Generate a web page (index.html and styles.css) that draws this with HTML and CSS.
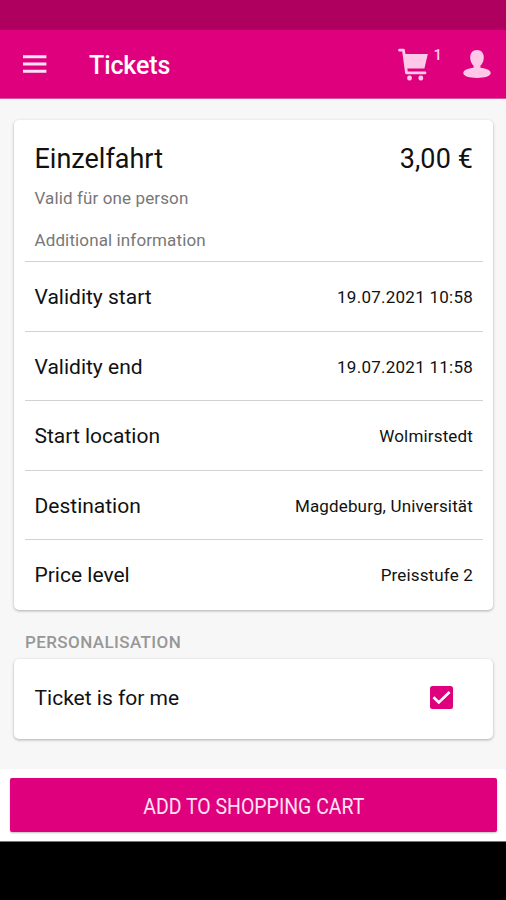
FILE: index.html
```html
<!DOCTYPE html>
<html lang="en">
<head>
<meta charset="utf-8">
<title>Tickets</title>
<link rel="stylesheet" href="styles.css">
</head>
<body>
<div class="status-bar"></div>
<header class="app-bar">
  <svg class="menu-icon" viewBox="0 0 24 18"><path d="M0 1.7h23.4M0 9h23.4M0 16.3h23.4"/></svg>
  <h1 class="app-title">Tickets</h1>
  <svg class="cart-icon" viewBox="0 0 32 33"><path class="cart-basket" d="M6 6h23.800l-3.400 14.500H8.500z"/><path class="cart-frame" d="M1.500 2.200h4l3 22.700h18.500"/><rect x="9.200" y="27.500" width="4.600" height="5" rx="2"/><rect x="20.500" y="27.500" width="4.600" height="5" rx="2"/></svg>
  <span class="cart-count">1</span>
  <svg class="user-icon" viewBox="0 0 28 28"><path d="M14 0c4.400 0 6.800 3.100 6.800 7.500 0 3.600-1.500 6.400-3.400 8.200v2.100c5.800.6 10.300 2.400 10.300 5.200 0 3.200-6.200 4.900-13.700 4.900S.3 26.200.3 23c0-2.800 4.500-4.600 10.300-5.200v-2.100c-1.900-1.800-3.400-4.600-3.400-8.200C7.200 3.100 9.600 0 14 0z"/></svg>
</header>
<main class="content">
  <section class="card">
    <div class="card-head">
      <div class="headline"><h2 class="name">Einzelfahrt</h2><span class="price">3,00 €</span></div>
      <p class="note">Valid für one person</p>
      <p class="note info">Additional information</p>
    </div>
    <dl class="details">
      <div class="row"><dt>Validity start</dt><dd class="date">19.07.2021 10:58</dd></div>
      <div class="row"><dt>Validity end</dt><dd class="date">19.07.2021 11:58</dd></div>
      <div class="row"><dt>Start location</dt><dd>Wolmirstedt</dd></div>
      <div class="row"><dt>Destination</dt><dd>Magdeburg, Universität</dd></div>
      <div class="row"><dt>Price level</dt><dd>Preisstufe 2</dd></div>
    </dl>
  </section>
  <h3 class="section-title">PERSONALISATION</h3>
  <section class="card owner">
    <span class="owner-label">Ticket is for me</span>
    <svg class="checkbox" viewBox="0 0 23 23"><rect width="23" height="23" rx="2.500"/><path d="M3.500 11.300l5.300 5.200L19.600 6"/></svg>
  </section>
</main>
<footer class="actions"><button class="add-button"><span class="add-label">ADD TO SHOPPING CART</span></button></footer>
<div class="nav-bar"></div>
</body>
</html>
```

FILE: styles.css
```css
* { box-sizing: border-box; margin: 0; padding: 0; }
body { width: 506px; height: 900px; overflow: hidden; display: flex; flex-direction: column; background: #f7f7f7; font-family: Roboto, sans-serif; color: #111; }
h1, h2, h3 { font-weight: 400; }
.status-bar { height: 30px; background: #af005f; }
.app-bar { height: 69px; background: #df007d; display: flex; align-items: center; padding: 0 15px 0 23px; border-bottom: 1px solid #d3569e; color: #fff; }
.menu-icon { width: 24px; height: 18px; fill: none; stroke: #ffe2f4; stroke-width: 3; }
.app-title { font-size: 25px; font-weight: 500; line-height: 30px; margin: 4px auto 0 42px; letter-spacing: -.1px; }
.cart-icon { width: 32px; height: 33px; fill: #ffc8e8; margin-right: 3px; }
.cart-frame { fill: none; stroke: #ffc8e8; stroke-width: 2.8; stroke-linejoin: round; stroke-linecap: round; }
.cart-count { font-size: 15px; font-weight: 500; line-height: 16px; color: #ffc8e8; margin: -18px 21px 0 0; }
.user-icon { width: 28px; height: 28px; fill: #ffc8e8; }
.content { height: 670px; padding: 21px 13px 0 14px; }
.card { background: #fff; border-radius: 5px; box-shadow: 0 1px 3px rgba(0,0,0,.3); }
.card-head { height: 141px; padding: 22px 20px 0 20.5px; }
.headline { display: flex; justify-content: space-between; height: 34px; font-size: 27px; line-height: 34px; }
.name { font-size: inherit; }
.price { letter-spacing: .1px; }
.note { font-size: 17px; line-height: 20px; margin-top: 12px; color: #777; letter-spacing: .12px; }
.info { margin-top: 22px; }
.note, .name, .price, .row dt, .row dd, .section-title, .owner-label { white-space: nowrap; }
.details { margin: 0 10px 0 11px; height: 349px; }
.row { height: 69.5px; border-top: 1.5px solid #d2d2d2; padding: 2px 10px 0 9.5px; display: flex; align-items: center; justify-content: space-between; }
.row dt, .owner-label { font-size: 21px; }
.row dd { font-size: 17px; letter-spacing: .16px; }
.row .date { letter-spacing: .25px; }
.section-title { height: 49px; padding: 22px 0 0 11px; font-size: 17px; line-height: 20px; font-weight: 500; letter-spacing: .4px; color: #979797; }
.owner { height: 80px; padding: 0 40px 3px 20.5px; display: flex; align-items: center; justify-content: space-between; }
.checkbox { width: 23px; height: 23px; fill: #df007d; }
.checkbox path { fill: none; stroke: #fff; stroke-width: 2.6; }
.actions { height: 73px; background: #fff; padding: 9px 9px 0 10px; border-bottom: 1px solid #777; }
.add-button { display: block; width: 100%; height: 54px; border: 0; border-radius: 2px; background: #df007d; color: #ffe2f4; font: 400 22.5px/56px Roboto, sans-serif; box-shadow: 0 1px 2px rgba(0,0,0,.25); }
.add-label { display: inline-block; transform: scaleX(.865); }
.nav-bar { flex: 1; background: #000; }
```
